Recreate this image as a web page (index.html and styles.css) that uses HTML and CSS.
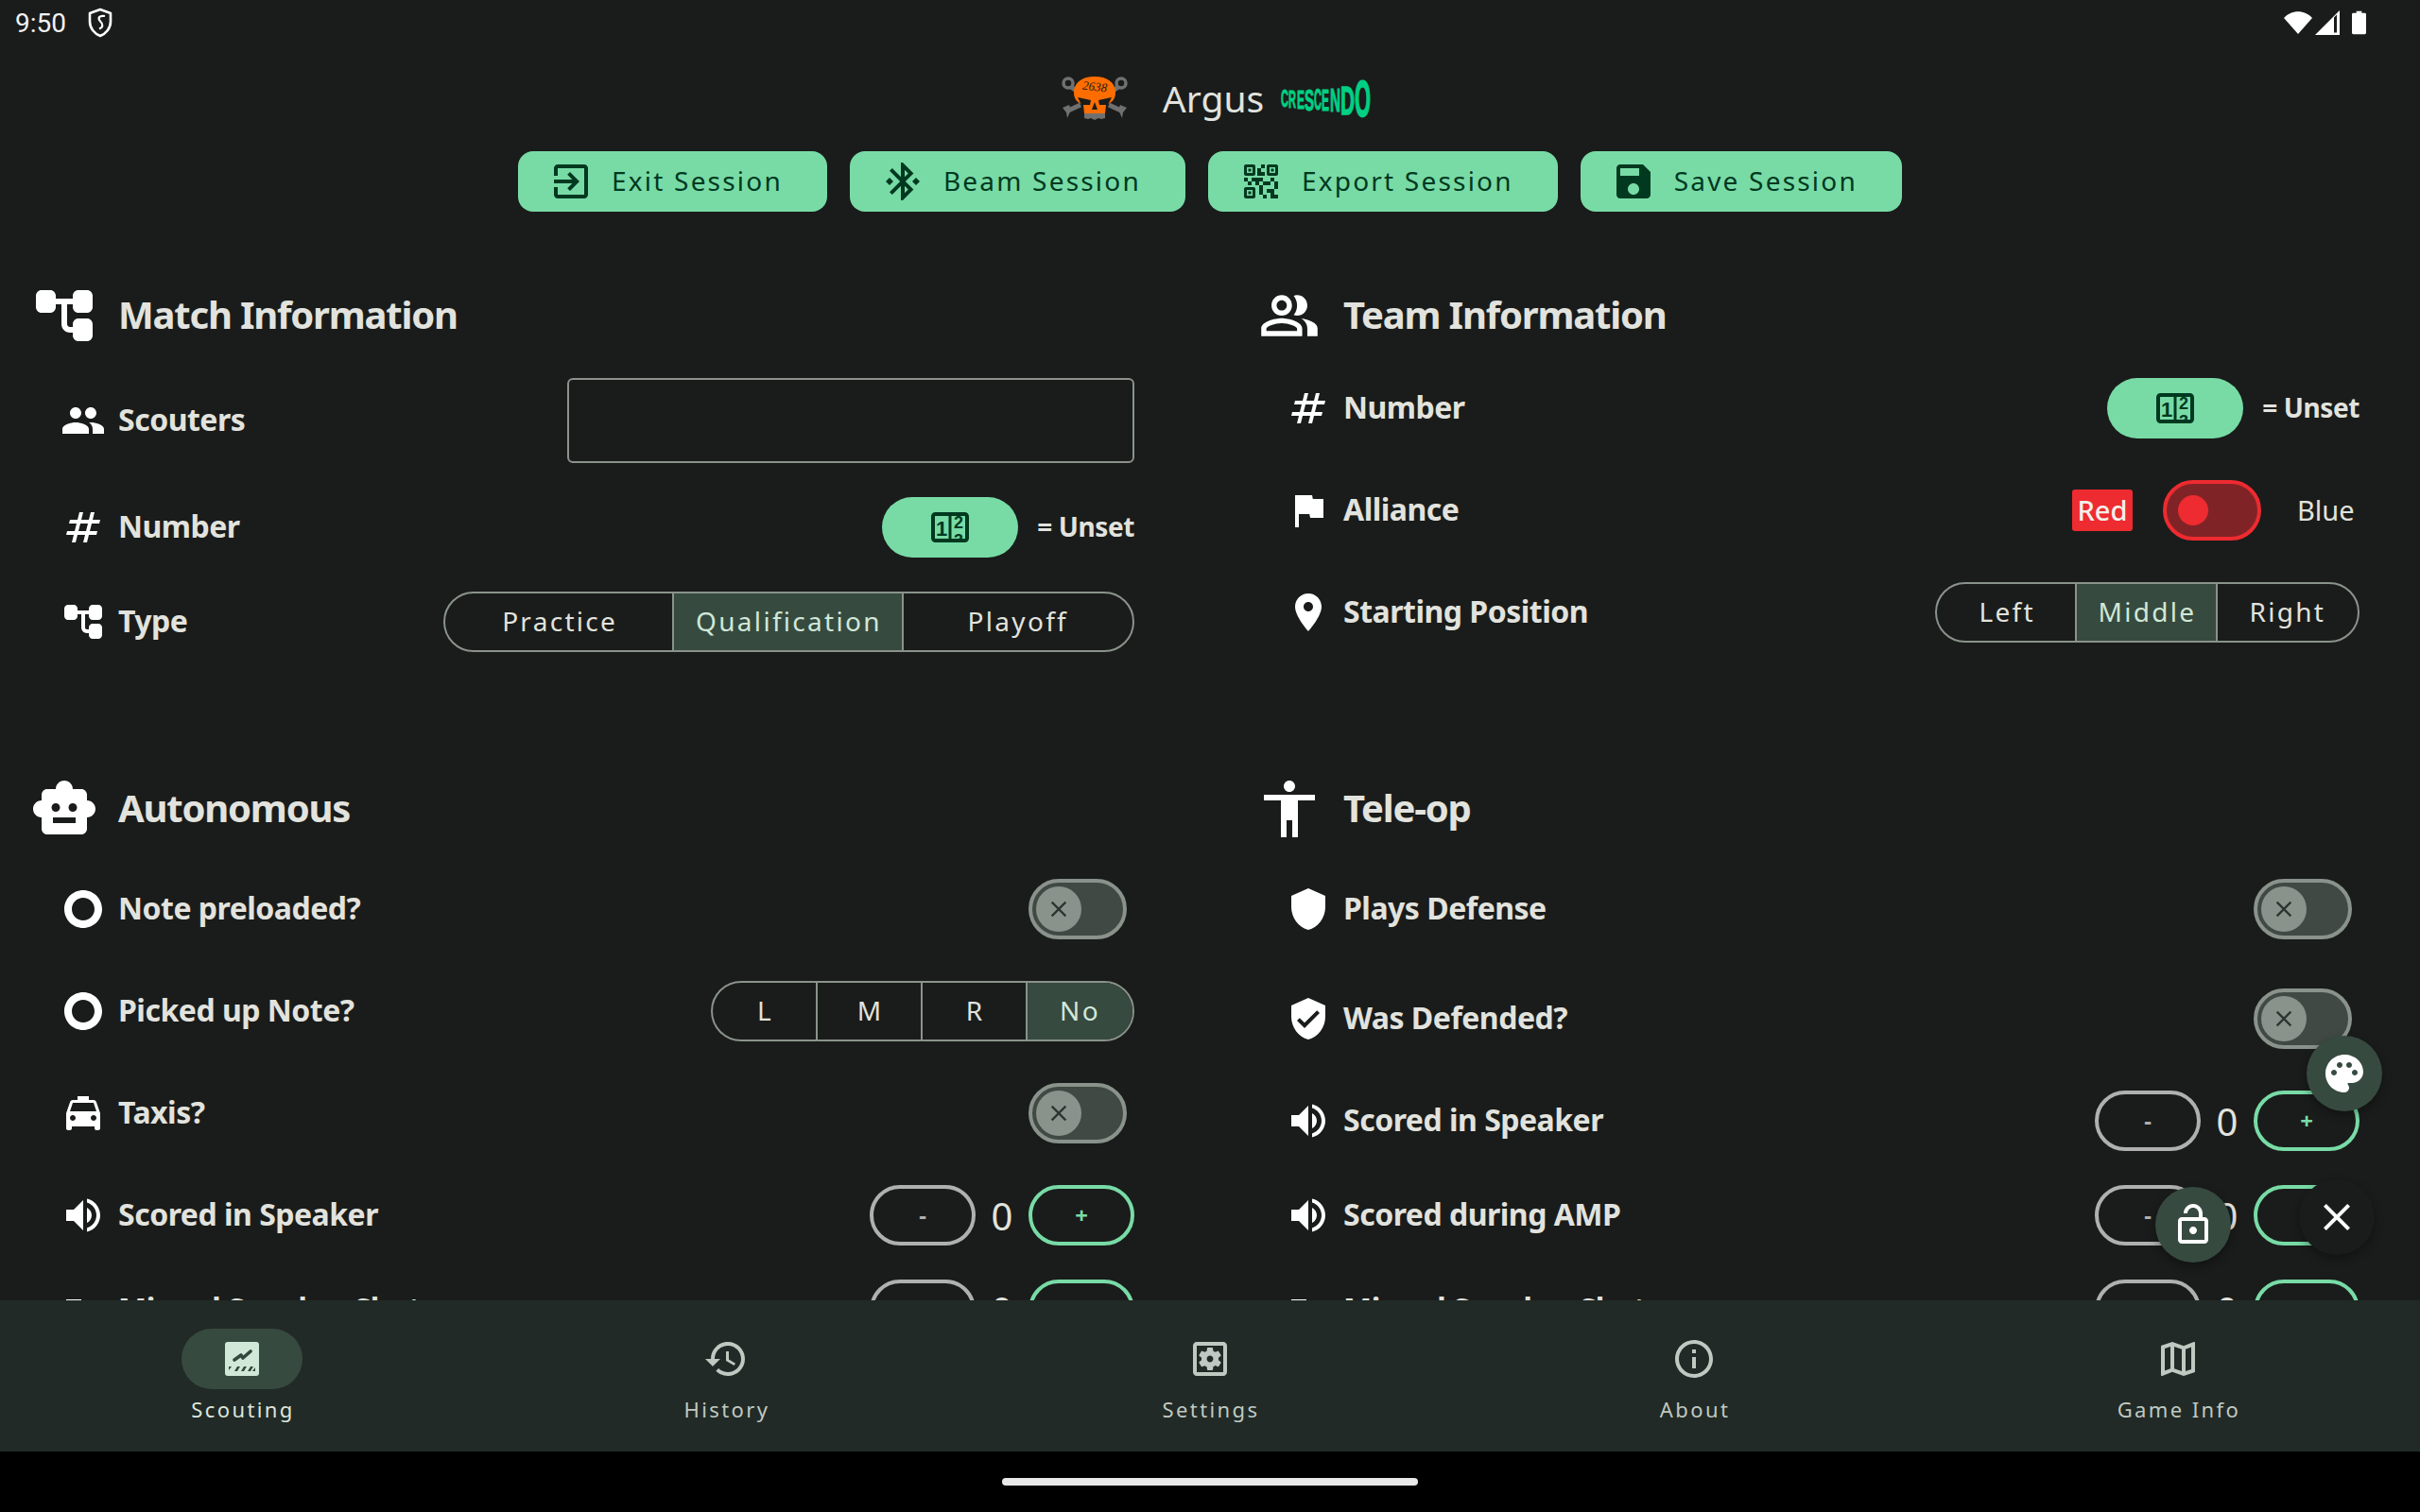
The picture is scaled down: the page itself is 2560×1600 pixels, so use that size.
FILE: index.html
```html
<!DOCTYPE html>
<html lang="en">
<head>
<meta charset="utf-8">
<title>Argus</title>
<link rel="stylesheet" href="styles.css">
</head>
<body>
<svg class="defs" aria-hidden="true">
<symbol id="i-exit" viewBox="0 0 24 24"><path d="M10.09 15.59L11.5 17l5-5-5-5-1.41 1.41L12.67 11H3v2h9.67l-2.58 2.59zM19 3H5c-1.11 0-2 .9-2 2v4h2V5h14v14H5v-4H3v4c0 1.1.89 2 2 2h14c1.1 0 2-.9 2-2V5c0-1.1-.9-2-2-2z"/></symbol>
<symbol id="i-bt" viewBox="0 0 24 24"><path d="M7 12l-2-2-2 2 2 2 2-2zm10.71-4.29L12 2h-1v7.59L6.41 5 5 6.41 10.59 12 5 17.59 6.41 19 11 14.41V22h1l5.71-5.71-4.3-4.29 4.3-4.29zM13 5.83l1.88 1.88L13 9.59V5.83zm1.88 10.46L13 18.17v-3.76l1.88 1.88zM19 10l-2 2 2 2 2-2-2-2z"/></symbol>
<symbol id="i-qr" viewBox="0 0 24 24"><path d="M15 21h-2v-2h2v2zm-2-7h-2v5h2v-5zm8-2h-2v4h2v-4zm-2-2h-2v2h2v-2zM7 12H5v2h2v-2zm-2-2H3v2h2v-2zm7-5h2V3h-2v2zm-7.5-.5v3h3v-3h-3zM8 9H4c-.55 0-1-.45-1-1V4c0-.55.45-1 1-1h4c.55 0 1 .45 1 1v4c0 .55-.45 1-1 1zm-3.5 7.5v3h3v-3h-3zM8 21H4c-.55 0-1-.45-1-1v-4c0-.55.45-1 1-1h4c.55 0 1 .45 1 1v4c0 .55-.45 1-1 1zm8.5-16.5v3h3v-3h-3zM20 9h-4c-.55 0-1-.45-1-1V4c0-.55.45-1 1-1h4c.55 0 1 .45 1 1v4c0 .55-.45 1-1 1zm-1 10v-3h-4v2h2v3h4v-2h-2zm-2-7h-4v2h4v-2zm-4-2H7v2h2v2h2v-2h2v-2zm1-1V7h-2V5h-2v4h4zM6.75 5.25h-1.5v1.5h1.5v-1.5zm0 12h-1.5v1.5h1.5v-1.5zm12-12h-1.5v1.5h1.5v-1.5z"/></symbol>
<symbol id="i-save" viewBox="0 0 24 24"><path d="M17 3H5c-1.11 0-2 .9-2 2v14c0 1.1.89 2 2 2h14c1.1 0 2-.9 2-2V7l-4-4zm-5 16c-1.66 0-3-1.34-3-3s1.34-3 3-3 3 1.34 3 3-1.34 3-3 3zm3-10H5V5h10v4z"/></symbol>
<symbol id="i-tree" viewBox="0 0 24 24"><path d="M17 11h3c1.11 0 2-.9 2-2V5c0-1.11-.9-2-2-2h-3c-1.11 0-2 .9-2 2v1H9.01V5c0-1.11-.9-2-2-2H4c-1.1 0-2 .9-2 2v4c0 1.11.9 2 2 2h3c1.11 0 2-.9 2-2V8h2v7.01c0 1.65 1.34 2.99 2.99 2.99H15v1c0 1.11.9 2 2 2h3c1.11 0 2-.9 2-2v-4c0-1.11-.9-2-2-2h-3c-1.11 0-2 .9-2 2v1h-1.01c-.54 0-.99-.45-.99-.99V8h2v1c0 1.1.9 2 2 2z"/></symbol>
<symbol id="i-group" viewBox="0 0 24 24"><path d="M16 11c1.66 0 2.99-1.34 2.99-3S17.66 5 16 5c-1.66 0-3 1.34-3 3s1.34 3 3 3zm-8 0c1.66 0 2.99-1.34 2.99-3S9.66 5 8 5C6.34 5 5 6.34 5 8s1.34 3 3 3zm0 2c-2.33 0-7 1.17-7 3.5V19h14v-2.5c0-2.33-4.67-3.5-7-3.5zm8 0c-.29 0-.62.02-.97.05 1.16.84 1.97 1.97 1.97 3.45V19h6v-2.5c0-2.33-4.67-3.5-7-3.5z"/></symbol>
<symbol id="i-people" viewBox="-1.3 -1.3 26.6 26.6"><path d="M16.67 13.13C18.04 14.06 19 15.32 19 17v3h4v-3c0-2.18-3.57-3.47-6.33-3.87zM15 12c2.21 0 4-1.79 4-4s-1.79-4-4-4c-.47 0-.91.1-1.33.24C14.5 5.27 15 6.58 15 8s-.5 2.73-1.33 3.76c.42.14.86.24 1.33.24zM9 12c2.21 0 4-1.79 4-4s-1.79-4-4-4-4 1.79-4 4 1.79 4 4 4zm0-6c1.1 0 2 .9 2 2s-.9 2-2 2-2-.9-2-2 .9-2 2-2zM9 13c-2.67 0-8 1.34-8 4v3h16v-3c0-2.66-5.33-4-8-4zm6 5H3v-.99C3.2 16.29 6.3 15 9 15s5.8 1.29 6 2v1z"/></symbol>
<symbol id="i-num" viewBox="0 0 24 24"><path d="M20.5 10l.5-2h-4l1-4h-2l-1 4h-4l1-4h-2L9 8H5l-.5 2h4l-1 4h-4L3 16h4l-1 4h2l1-4h4l-1 4h2l1-4h4l.5-2h-4l1-4h4zm-7 4h-4l1-4h4l-1 4z"/></symbol>
<symbol id="i-flag" viewBox="0 0 24 24"><path d="M14.4 6L14 4H5v17h2v-7h5.6l.4 2h7V6z"/></symbol>
<symbol id="i-place" viewBox="0 0 24 24"><path d="M12 2C8.13 2 5 5.13 5 9c0 5.25 7 13 7 13s7-7.75 7-13c0-3.87-3.13-7-7-7zm0 9.5c-1.38 0-2.5-1.12-2.5-2.5s1.12-2.5 2.5-2.5 2.5 1.12 2.5 2.5-1.12 2.5-2.5 2.5z"/></symbol>
<symbol id="i-robot" viewBox="0 0 24 24"><path d="M20 9V7c0-1.1-.9-2-2-2h-3c0-1.66-1.34-3-3-3S9 3.34 9 5H6c-1.1 0-2 .9-2 2v2c-1.66 0-3 1.34-3 3s1.34 3 3 3v4c0 1.1.9 2 2 2h12c1.1 0 2-.9 2-2v-4c1.66 0 3-1.34 3-3s-1.34-3-3-3zM7.5 11.5c0-.83.67-1.5 1.5-1.5s1.5.67 1.5 1.5S9.83 13 9 13s-1.5-.67-1.5-1.5zM16 17H8v-2h8v2zm-1-4c-.83 0-1.5-.67-1.5-1.5S14.17 10 15 10s1.5.67 1.5 1.5S15.83 13 15 13z"/></symbol>
<symbol id="i-access" viewBox="0 0 24 24"><path d="M12 2c1.1 0 2 .9 2 2s-.9 2-2 2-2-.9-2-2 .9-2 2-2zm9 7h-6v13h-2v-6h-2v6H9V9H3V7h18v2z"/></symbol>
<symbol id="i-ring" viewBox="0 0 24 24"><path d="M2 12C2 6.48 6.48 2 12 2s10 4.48 10 10-4.48 10-10 10S2 17.52 2 12zm10 6c3.31 0 6-2.69 6-6s-2.69-6-6-6-6 2.69-6 6 2.69 6 6 6z"/></symbol>
<symbol id="i-taxi" viewBox="0 0 24 24"><path d="M18.92 6.01C18.72 5.42 18.16 5 17.5 5H15V3H9v2H6.5c-.66 0-1.21.42-1.42 1.01L3 12v8c0 .55.45 1 1 1h1c.55 0 1-.45 1-1v-1h12v1c0 .55.45 1 1 1h1c.55 0 1-.45 1-1v-8l-2.08-5.99zM6.5 16c-.83 0-1.5-.67-1.5-1.5S5.67 13 6.5 13s1.5.67 1.5 1.5S7.33 16 6.5 16zm11 0c-.83 0-1.5-.67-1.5-1.5s.67-1.5 1.5-1.5 1.5.67 1.5 1.5-.67 1.5-1.5 1.5zM5 11l1.5-4.5h11L19 11H5z"/></symbol>
<symbol id="i-vol" viewBox="0 0 24 24"><path d="M3 9v6h4l5 5V4L7 9H3zm13.5 3c0-1.77-1.02-3.29-2.5-4.03v8.05c1.48-.73 2.5-2.25 2.5-4.02zM14 3.23v2.06c2.89.86 5 3.54 5 6.71s-2.11 5.85-5 6.71v2.06c4.01-.91 7-4.49 7-8.77s-2.99-7.86-7-8.77z"/></symbol>
<symbol id="i-miss" viewBox="0 0 24 24"><path d="M3 6.500h8v11H3zM14 8l7 8h-3l-4-5z"/></symbol>
<symbol id="i-shield" viewBox="0 0 24 24"><path d="M12 1L3 5v6c0 5.55 3.84 10.74 9 12 5.16-1.26 9-6.45 9-12V5l-9-4z"/></symbol>
<symbol id="i-vuser" viewBox="0 0 24 24"><path d="M12 1L3 5v6c0 5.55 3.84 10.74 9 12 5.16-1.26 9-6.45 9-12V5l-9-4zm-2 16l-4-4 1.41-1.41L10 14.17l6.59-6.59L18 9l-8 8z"/></symbol>
<symbol id="i-palette" viewBox="0 0 24 24"><path d="M12 2C6.49 2 2 6.49 2 12s4.49 10 10 10c1.38 0 2.5-1.12 2.5-2.5 0-.61-.23-1.2-.64-1.67-.08-.1-.13-.21-.13-.33 0-.28.22-.5.5-.5H16c3.31 0 6-2.69 6-6 0-4.96-4.49-9-10-9zm5.5 11c-.83 0-1.5-.67-1.5-1.5s.67-1.5 1.5-1.5 1.5.67 1.5 1.5-.67 1.5-1.5 1.5zm-3-4c-.83 0-1.5-.67-1.5-1.5S13.67 6 14.5 6s1.5.67 1.5 1.5S15.33 9 14.5 9zM5 11.5c0-.83.67-1.5 1.5-1.5s1.5.67 1.5 1.5S7.33 13 6.5 13 5 12.33 5 11.5zm6-4c0 .83-.67 1.5-1.5 1.5S8 8.33 8 7.5 8.67 6 9.5 6s1.5.67 1.5 1.5z"/></symbol>
<symbol id="i-lock" viewBox="0 0 24 24"><path d="M18 8h-1V6c0-2.76-2.24-5-5-5S7 3.24 7 6h2c0-1.66 1.34-3 3-3s3 1.34 3 3v2H6c-1.1 0-2 .9-2 2v10c0 1.1.9 2 2 2h12c1.1 0 2-.9 2-2V10c0-1.1-.9-2-2-2zm0 12H6V10h12v10zm-6-3c1.1 0 2-.9 2-2s-.9-2-2-2-2 .9-2 2 .9 2 2 2z"/></symbol>
<symbol id="i-close" viewBox="0 0 24 24"><path d="M19 6.41L17.59 5 12 10.59 6.41 5 5 6.41 10.59 12 5 17.59 6.41 19 12 13.41 17.59 19 19 17.59 13.41 12z"/></symbol>
<symbol id="i-history" viewBox="0 0 24 24"><path d="M13 3c-4.97 0-9 4.03-9 9H1l3.89 3.89.07.14L9 12H6c0-3.87 3.13-7 7-7s7 3.13 7 7-3.13 7-7 7c-1.93 0-3.68-.79-4.94-2.06l-1.42 1.42C8.27 19.99 10.51 21 13 21c4.97 0 9-4.03 9-9s-4.03-9-9-9zm-1 5v5l4.28 2.54.72-1.21-3.5-2.08V8H12z"/></symbol>
<symbol id="i-settings" viewBox="0 0 24 24"><path d="M6.21 13.97l1.2 2.07c.08.13.23.18.37.13l1.49-.6c.31.24.64.44 1.01.59l.22 1.59c.03.14.15.25.3.25h2.4c.15 0 .27-.11.3-.26l.22-1.59c.36-.15.7-.35 1.01-.59l1.49.6c.14.05.29 0 .37-.13l1.2-2.07c.08-.13.04-.29-.07-.39l-1.27-.99c.03-.19.04-.39.04-.58 0-.2-.02-.39-.04-.59l1.27-.99c.11-.09.15-.26.07-.39l-1.2-2.07c-.08-.13-.23-.18-.37-.13l-1.49.6c-.31-.24-.64-.44-1.01-.59l-.22-1.59c-.03-.14-.15-.25-.3-.25h-2.4c-.15 0-.27.11-.3.26l-.22 1.59c-.36.15-.71.34-1.01.58l-1.49-.6c-.14-.05-.29 0-.37.13l-1.2 2.07c-.08.13-.04.29.07.39l1.27.99c-.03.2-.05.39-.05.59 0 .2.02.39.04.59l-1.27.99c-.11.1-.14.26-.06.39zM12 10.29c.94 0 1.71.77 1.71 1.71s-.77 1.71-1.71 1.71-1.71-.77-1.71-1.71.77-1.71 1.71-1.71zM19 3H5c-1.1 0-2 .9-2 2v14c0 1.1.9 2 2 2h14c1.1 0 2-.9 2-2V5c0-1.1-.9-2-2-2zm0 16H5V5h14v14z"/></symbol>
<symbol id="i-info" viewBox="0 0 24 24"><path d="M11 7h2v2h-2zm0 4h2v6h-2zm1-9C6.48 2 2 6.48 2 12s4.48 10 10 10 10-4.48 10-10S17.52 2 12 2zm0 18c-4.41 0-8-3.59-8-8s3.59-8 8-8 8 3.59 8 8-3.59 8-8 8z"/></symbol>
<symbol id="i-map" viewBox="0 0 24 24"><path d="M20.5 3l-.16.03L15 5.1 9 3 3.36 4.9c-.21.07-.36.25-.36.48V20.5c0 .28.22.5.5.5l.16-.03L9 18.9l6 2.1 5.64-1.9c.21-.07.36-.25.36-.48V3.5c0-.28-.22-.5-.5-.5zM10 5.47l4 1.4v11.66l-4-1.4V5.47zm-5 .99l3-1.01v11.7l-3 1.16V6.46zm14 11.08l-3 1.01V6.86l3-1.16v11.84z"/></symbol>
<symbol id="i-chart" viewBox="0 0 36 36"><rect width="36" height="36" rx="3" fill="#d0e8d8"/><path d="M10 19l7-5 2 3 8-7" fill="none" stroke="#33483c" stroke-width="3.6" stroke-linecap="round" stroke-linejoin="round"/><path d="M4 26h3l-3 4zM10 31l3-5h3l-3 5zM17 31l3-5h3l-3 5zM24 31l3-5h3l-3 5zM32 27v4h-3z" fill="#33483c"/></symbol>
</svg>

<div class="status">
  <div class="status-left">
    <span class="clock">9:50</span>
    <svg class="status-shield" viewBox="0 0 28 32"><path d="M14 2L3 6v9c0 7 5 12.500 11 15 6-2.500 11-8 11-15V6z" fill="none" stroke="currentColor" stroke-width="2.600" stroke-linejoin="round"/><path d="M19 9c-6-1-8 2-5 5.500 3.500 3 3 6.500-1 8" fill="none" stroke="currentColor" stroke-width="2.200"/></svg>
  </div>
  <div class="status-right">
    <svg class="st-wifi" viewBox="0 0 30 24"><path d="M15 24L0 7c8-9 22-9 30 0z"/></svg>
    <svg class="st-signal" viewBox="0 0 26 26"><path fill-rule="evenodd" d="M26 0v26H0zM20 7.500v16h3V4.500z"/></svg>
    <svg class="st-batt" viewBox="0 0 16 26"><path d="M5 0h6v2h3.500c.8 0 1.500.7 1.500 1.500V24.500c0 .8-.7 1.500-1.500 1.500H1.500C.7 26 0 25.300 0 24.500V3.500C0 2.700.7 2 1.500 2H5z"/></svg>
  </div>
</div>

<main class="content">
  <header class="brand">
    <svg class="skull" viewBox="0 0 70 46">
      <g fill="none" stroke="#707070" stroke-width="3.500">
        <circle cx="7" cy="7" r="5"/><circle cx="63" cy="7" r="5"/>
      </g>
      <path d="M10 11l10 7M60 11l-10 7M7 36L20 30M63 36L50 30" stroke="#707070" stroke-width="5"/>
      <path d="M1 33l7-3 2 5-4 9-1-6zM69 33l-7-3-2 5 4 9 1-6z" fill="#707070"/>
      <path d="M24 37h22v7l-4 1-3-1-4 2-4-2-3 1-4-1z" fill="#707070"/>
      <path d="M35 0c13 0 22 6 22 17 0 7-4 11-10 13l-1 9H24l-1-9c-6-2-10-6-10-13C13 6 22 0 35 0z" fill="#ff6d00"/>
      <path d="M17 22l14 3-1 5-9 0zM53 22l-14 3 1 5 9 0zM35 27l3 8h-6z" fill="#1a1c1b"/>
      <text class="skull-num" x="35" y="15" transform="rotate(6 35 12)">2638</text>
    </svg>
    <h1 class="brand-name">Argus</h1>
    <svg class="crescendo" viewBox="0 0 98 40">
      <text class="cr" transform="translate(0 29) scale(.55 1.26)">C</text>
      <text class="cr" transform="translate(8 29.500) scale(.55 1.33)">R</text>
      <text class="cr" transform="translate(17 30.500) scale(.6 1.4)">E</text>
      <text class="cr" transform="translate(25 33) scale(.75 1.6)">S</text>
      <text class="cr" transform="translate(35 32) scale(.55 1.54)">C</text>
      <text class="cr" transform="translate(43 33) scale(.6 1.6)">E</text>
      <text class="cr" transform="translate(52 34) scale(.76 1.75)">N</text>
      <text class="cr" transform="translate(63 37) scale(1.04 2.1)">D</text>
      <text class="cr" transform="translate(78 39) scale(1.09 2.7)">O</text>
    </svg>
  </header>
  <div class="actions">
    <button class="action"><svg class="ic48"><use href="#i-exit"/></svg><span class="action-text">Exit Session</span></button>
    <button class="action"><svg class="ic48"><use href="#i-bt"/></svg><span class="action-text">Beam Session</span></button>
    <button class="action"><svg class="ic48"><use href="#i-qr"/></svg><span class="action-text">Export Session</span></button>
    <button class="action"><svg class="ic48"><use href="#i-save"/></svg><span class="action-text">Save Session</span></button>
  </div>

  <div class="columns">
    <section class="section">
      <h2 class="title"><svg class="ic72"><use href="#i-tree"/></svg><span class="title-text">Match Information</span></h2>
      <div class="row first-top field-row"><svg class="ic48"><use href="#i-group"/></svg><span class="label">Scouters</span><div class="field"></div></div>
      <div class="row tight"><svg class="ic48"><use href="#i-num"/></svg><span class="label">Number</span><button class="pill"><svg class="pin" viewBox="0 0 40 32"><text class="pin-digit" x="11" y="25">1</text><text class="pin-digit pin-small" x="29" y="17">2</text><text class="pin-digit pin-small" x="29" y="36">3</text><rect x="2" y="2" width="36" height="28" rx="2.500" fill="none" stroke="currentColor" stroke-width="4"/><path d="M20 2v28" stroke="currentColor" stroke-width="3"/></svg></button><span class="value">= Unset</span></div>
      <div class="row tight"><svg class="ic48"><use href="#i-tree"/></svg><span class="label">Type</span>
        <div class="seg seg-type"><span>Practice</span><span class="on">Qualification</span><span>Playoff</span></div></div>
    </section>
    <section class="section">
      <h2 class="title"><svg class="ic72"><use href="#i-people"/></svg><span class="title-text">Team Information</span></h2>
      <div class="row first-top"><svg class="ic48"><use href="#i-num"/></svg><span class="label">Number</span><button class="pill"><svg class="pin" viewBox="0 0 40 32"><text class="pin-digit" x="11" y="25">1</text><text class="pin-digit pin-small" x="29" y="17">2</text><text class="pin-digit pin-small" x="29" y="36">3</text><rect x="2" y="2" width="36" height="28" rx="2.500" fill="none" stroke="currentColor" stroke-width="4"/><path d="M20 2v28" stroke="currentColor" stroke-width="3"/></svg></button><span class="value">= Unset</span></div>
      <div class="row"><svg class="ic48"><use href="#i-flag"/></svg><span class="label">Alliance</span><span class="red-tag">Red</span><span class="switch"></span><span class="blue">Blue</span></div>
      <div class="row"><svg class="ic48"><use href="#i-place"/></svg><span class="label">Starting Position</span>
        <div class="seg seg-pos"><span>Left</span><span class="on">Middle</span><span>Right</span></div></div>
    </section>

    <section class="section">
      <h2 class="title"><svg class="ic72"><use href="#i-robot"/></svg><span class="title-text">Autonomous</span></h2>
      <div class="row first"><svg class="ic48"><use href="#i-ring"/></svg><span class="label">Note preloaded?</span><span class="toggle"><span class="thumb"><svg class="ic28"><use href="#i-close"/></svg></span></span></div>
      <div class="row"><svg class="ic48"><use href="#i-ring"/></svg><span class="label">Picked up Note?</span>
        <div class="seg seg-pick"><span>L</span><span>M</span><span>R</span><span class="on">No</span></div></div>
      <div class="row"><svg class="ic48"><use href="#i-taxi"/></svg><span class="label">Taxis?</span><span class="toggle"><span class="thumb"><svg class="ic28"><use href="#i-close"/></svg></span></span></div>
      <div class="row"><svg class="ic48"><use href="#i-vol"/></svg><span class="label">Scored in Speaker</span><div class="stepper"><button class="step">-</button><span class="count">0</span><button class="step plus">+</button></div></div>
      <div class="row tight"><svg class="ic48"><use href="#i-miss"/></svg><span class="label">Missed Speaker Shots</span><div class="stepper"><button class="step">-</button><span class="count">0</span><button class="step plus">+</button></div></div>
    </section>
    <section class="section">
      <h2 class="title"><svg class="ic72"><use href="#i-access"/></svg><span class="title-text">Tele-op</span></h2>
      <div class="row first"><svg class="ic48"><use href="#i-shield"/></svg><span class="label">Plays Defense</span><span class="toggle"><span class="thumb"><svg class="ic28"><use href="#i-close"/></svg></span></span></div>
      <div class="row loose"><svg class="ic48"><use href="#i-vuser"/></svg><span class="label">Was Defended?</span><span class="toggle"><span class="thumb"><svg class="ic28"><use href="#i-close"/></svg></span></span></div>
      <div class="row"><svg class="ic48"><use href="#i-vol"/></svg><span class="label">Scored in Speaker</span><div class="stepper"><button class="step">-</button><span class="count">0</span><button class="step plus">+</button></div></div>
      <div class="row tight"><svg class="ic48"><use href="#i-vol"/></svg><span class="label">Scored during AMP</span><div class="stepper"><button class="step">-</button><span class="count">0</span><button class="step plus">+</button></div></div>
      <div class="row tight"><svg class="ic48"><use href="#i-miss"/></svg><span class="label">Missed Speaker Shots</span><div class="stepper"><button class="step">-</button><span class="count">0</span><button class="step plus">+</button></div></div>
    </section>
  </div>
</main>

<nav class="nav">
  <div class="nav-item active"><span class="nav-icon"><svg class="ic36"><use href="#i-chart"/></svg></span><span class="nav-label">Scouting</span></div>
  <div class="nav-item"><span class="nav-icon"><svg class="ic48"><use href="#i-history"/></svg></span><span class="nav-label">History</span></div>
  <div class="nav-item"><span class="nav-icon"><svg class="ic48"><use href="#i-settings"/></svg></span><span class="nav-label">Settings</span></div>
  <div class="nav-item"><span class="nav-icon"><svg class="ic48"><use href="#i-info"/></svg></span><span class="nav-label">About</span></div>
  <div class="nav-item"><span class="nav-icon"><svg class="ic48"><use href="#i-map"/></svg></span><span class="nav-label">Game Info</span></div>
</nav>
<div class="gesture"><span class="gesture-pill"></span></div>

<button class="fab fab-palette"><svg class="ic48"><use href="#i-palette"/></svg></button>
<button class="fab fab-lock"><svg class="ic48"><use href="#i-lock"/></svg></button>
<button class="fab fab-close"><svg class="ic48"><use href="#i-close"/></svg></button>
</body>
</html>
```
FILE: styles.css
```css
* { box-sizing: border-box; }
html, body { margin: 0; height: 100%; }
body {
  position: relative;
  width: 2560px;
  height: 1600px;
  overflow: hidden;
  display: flex;
  flex-direction: column;
  background: #1a1c1b;
  color: #e2e3de;
  font-family: "Noto Sans", "Open Sans", sans-serif;
}
button { font: inherit; margin: 0; padding: 0; border: 0; background: none; color: inherit; }
svg { fill: currentColor; flex: none; }
.defs { position: absolute; width: 0; height: 0; }
.ic28 { width: 28px; height: 28px; }
.ic36 { width: 36px; height: 36px; }
.ic48 { width: 48px; height: 48px; }
.ic72 { width: 72px; height: 72px; }

/* status bar */
.status { height: 48px; padding: 0 48px 0 16px; display: flex; justify-content: space-between; align-items: center; flex: none; color: #fff; }
.status-left { display: flex; align-items: center; gap: 22px; }
.clock { font-family: Roboto, sans-serif; font-size: 28px; color: #f2f2f2; }
.status-shield { width: 28px; height: 32px; }
.status-right { display: flex; align-items: center; gap: 3px; margin-right: 9px; }
.st-wifi { width: 30px; height: 24px; }
.st-signal { width: 26px; height: 26px; margin-right: 10px; }
.st-batt { width: 15px; height: 26px; }

/* content */
.content { flex: 1; min-height: 0; overflow: hidden; }
.brand { height: 64px; margin-top: 24px; display: flex; justify-content: center; align-items: center; padding-left: 16px; }
.skull { width: 70px; height: 46px; }
.skull-num { font-family: "Liberation Serif", serif; font-style: italic; font-size: 13px; fill: #1a1c1b; text-anchor: middle; }
.brand-name { margin: 0 18px 0 37px; font-size: 39px; font-weight: 400; line-height: 64px; }
.crescendo { width: 98px; height: 40px; fill: #00d084; overflow: visible; }
.cr { font-family: "Liberation Sans", sans-serif; font-weight: 700; font-size: 20px; stroke: #00d084; stroke-width: .7px; }

.actions { margin-top: 24px; height: 64px; display: flex; justify-content: center; gap: 24px; }
.action { height: 64px; padding: 0 47px 0 32px; display: flex; align-items: center; gap: 19px; background: #78dba6; color: #00391f; border-radius: 16px; font-size: 28px; letter-spacing: 2.2px; white-space: nowrap; }
.action-text { padding-bottom: 2px; }

.columns { margin-top: 74px; padding: 0 64px 0 32px; display: grid; grid-template-columns: 1168px 1168px; column-gap: 128px; grid-template-rows: 522px auto; }
.section { display: flex; flex-direction: column; }
.section svg { color: #fff; }
.title { margin: 0; height: 72px; display: flex; align-items: center; gap: 21px; font-size: 40px; font-weight: 700; line-height: 1; white-space: nowrap; }
.title-text { padding-bottom: 3px; letter-spacing: -1.2px; }
.row { height: 64px; flex: none; margin-top: 44px; padding-left: 32px; display: flex; align-items: center; justify-content: flex-end; }
.row > svg { margin-right: 13px; }
.tight { margin-top: 36px; }
.first-top { margin-top: 30px; }
.first { margin-top: 38px; }
.loose { margin-top: 52px; }
.label { font-size: 32px; font-weight: 700; letter-spacing: -0.5px; margin-right: auto; padding-bottom: 3px; white-space: nowrap; }
.field-row { height: 90px; }
.field { width: 600px; height: 90px; border: 2px solid #8a938b; border-radius: 6px; }

.section .pill { width: 144px; height: 64px; border-radius: 32px; background: #78dba6; color: #00391f; display: flex; justify-content: center; align-items: center; }
.section .pin { width: 40px; height: 32px; color: #00391f; fill: #00391f; }
.pin-digit { font-family: "Liberation Sans", sans-serif; font-size: 22px; text-anchor: middle; font-weight: 700; }
.pin-small { font-size: 18px; }
.value { margin-left: 20px; font-size: 28px; font-weight: 700; letter-spacing: -0.4px; padding-bottom: 2px; width: 103px; white-space: nowrap; text-align: right; }

.seg { height: 64px; display: grid; grid-auto-flow: column; grid-auto-columns: 1fr; border: 2px solid #8a938b; border-radius: 32px; overflow: hidden; font-size: 28px; letter-spacing: 2.3px; }
.seg span { display: flex; align-items: center; justify-content: center; border-left: 2px solid #8a938b; padding-bottom: 2px; }
.seg span + span { margin-left: -2px; }
.seg span:first-child { border-left: 0; }
.seg .on { background: #374a3f; color: #d0e8d8; }
.seg-type { width: 731px; }
.seg-pos { width: 449px; }
.seg-pick { width: 448px; }

.red-tag { width: 64px; height: 44px; background: #ed2b30; color: #f4efe9; border-radius: 3px; font-size: 29px; font-weight: 500; padding-bottom: 2px; display: flex; align-items: center; justify-content: center; }
.switch { position: relative; width: 104px; height: 64px; margin-left: 32px; border: 4px solid #ed2b30; border-radius: 32px; background: #802326; }
.switch::after { content: ""; position: absolute; left: 12px; top: 12px; width: 32px; height: 32px; border-radius: 50%; background: #ed2b30; }
.blue { width: 104px; padding: 0 0 2px 38px; font-size: 29px; white-space: nowrap; }

.toggle { position: relative; width: 104px; height: 64px; margin-right: 8px; border: 4px solid #8a938b; border-radius: 32px; background: #404943; }
.thumb { position: absolute; left: 4px; top: 4px; width: 48px; height: 48px; border-radius: 50%; background: #8a938b; display: flex; align-items: center; justify-content: center; }
.section .thumb svg { color: #2c3631; fill: #2c3631; }

.stepper { display: flex; align-items: center; }
.step { width: 112px; height: 64px; border: 4px solid #b0b0b0; border-radius: 32px; color: #b0b0b0; font-size: 24px; font-weight: 700; line-height: 1; display: flex; align-items: center; justify-content: center; }
.plus { border-color: #78dba6; color: #78dba6; }
.count { width: 56px; text-align: center; font-size: 40px; font-weight: 400; }

/* nav */
.nav { height: 160px; flex: none; background: #212a26; display: grid; grid-template-columns: repeat(5, 1fr); color: #c0c9c1; font-size: 22px; letter-spacing: 2.4px; }
.nav-item { display: flex; flex-direction: column; align-items: center; padding-top: 30px; gap: 6px; }
.nav-label { padding-left: 2px; }
.nav-icon { width: 128px; height: 64px; border-radius: 32px; display: flex; align-items: center; justify-content: center; }
.active { color: #dde5dc; }
.active .nav-icon { background: #374a3f; }
.gesture { height: 64px; flex: none; background: #000; display: flex; justify-content: center; padding-top: 28px; }
.gesture-pill { width: 440px; height: 8px; border-radius: 4px; background: #e8e8e8; }

/* floating */
.fab { position: absolute; width: 80px; height: 80px; border-radius: 50%; background: #374a3f; color: #fff; display: flex; align-items: center; justify-content: center; box-shadow: 0 4px 10px rgba(0,0,0,.35); }
.fab-palette { left: 2440px; top: 1096px; }
.fab-lock { left: 2280px; top: 1256px; }
.fab-close { left: 2432px; top: 1248px; background: #1a1c1b; }
```
